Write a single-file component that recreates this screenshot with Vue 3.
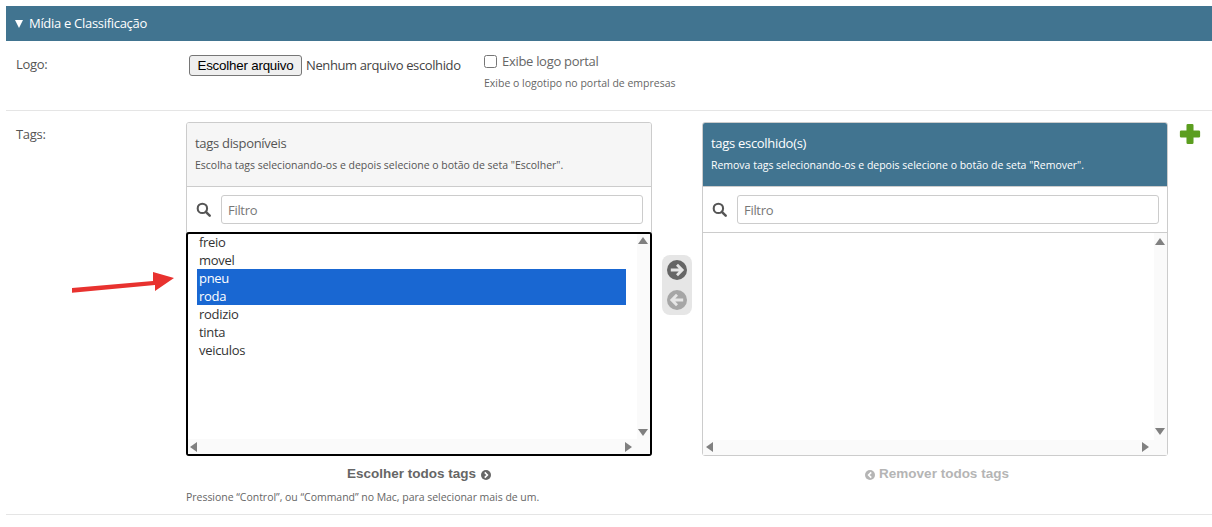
<script setup>
const panels = [
  {
    key: 'left',
    title: 'tags disponíveis',
    help: 'Escolha tags selecionando-os e depois selecione o botão de seta "Escolher".',
    items: [
      { t: 'freio' }, { t: 'movel' }, { t: 'pneu', s: true }, { t: 'roda', s: true },
      { t: 'rodizio' }, { t: 'tinta' }, { t: 'veiculos' }
    ]
  },
  {
    key: 'right',
    title: 'tags escolhido(s)',
    help: 'Remova tags selecionando-os e depois selecione o botão de seta "Remover".',
    items: []
  }
]
</script>

<template>
  <div class="page">
    <div class="bar"><span class="caret"></span>Mídia e Classificação</div>

    <div class="row logo-row">
      <label class="lbl">Logo:</label>
      <div class="file">
        <button class="file-btn" type="button">Escolher arquivo</button>
        <span class="file-name">Nenhum arquivo escolhido</span>
      </div>
      <div class="portal">
        <label class="check"><input type="checkbox" />Exibe logo portal</label>
        <div class="hint">Exibe o logotipo no portal de empresas</div>
      </div>
    </div>

    <div class="row tags-row">
      <label class="lbl">Tags:</label>
      <div class="dual">
        <div class="col">
          <div class="panel">
            <div class="phead">
              <div class="ptitle">{{ panels[0].title }}</div>
              <div class="phelp">{{ panels[0].help }}</div>
            </div>
            <div class="filter">
              <svg class="search" viewBox="0 0 16 16"><circle cx="6.8" cy="6.8" r="5" fill="none" stroke="currentColor" stroke-width="2.2"/><path d="M10.5 10.5 L14.6 14.6" stroke="currentColor" stroke-width="2.6" stroke-linecap="round"/></svg>
              <div class="finput">Filtro</div>
            </div>
            <div class="list focus">
              <div v-for="it in panels[0].items" :key="it.t" class="opt" :class="{ sel: it.s }">{{ it.t }}</div>
              <div class="vtrack"><i class="tri up"></i><i class="tri down"></i></div>
              <div class="htrack"><i class="tri lf"></i><i class="tri rt"></i></div>
            </div>
          </div>
          <div class="all"><span>Escolher todos tags</span>
            <svg class="mini" viewBox="0 0 16 16"><circle cx="8" cy="8" r="8" fill="currentColor"/><path d="M6 3.8 L10.2 8 L6 12.2" fill="none" stroke="#fff" stroke-width="2.6"/></svg>
          </div>
          <div class="note">Pressione “Control”, ou “Command” no Mac, para selecionar mais de um.</div>
        </div>

        <div class="mover">
          <svg class="mv" viewBox="0 0 20 20"><circle cx="10" cy="10" r="10" fill="#666"/><path d="M3.8 10 H14.5 M10 4.8 L15.2 10 L10 15.2" fill="none" stroke="#e6e6e6" stroke-width="2.8"/></svg>
          <svg class="mv" viewBox="0 0 20 20"><circle cx="10" cy="10" r="10" fill="#a6a6a6"/><path d="M16.2 10 H5.5 M10 4.8 L4.8 10 L10 15.2" fill="none" stroke="#e6e6e6" stroke-width="2.8"/></svg>
        </div>

        <div class="col">
          <div class="panel">
            <div class="phead chosen">
              <div class="ptitle">{{ panels[1].title }}</div>
              <div class="phelp">{{ panels[1].help }}</div>
            </div>
            <div class="filter">
              <svg class="search" viewBox="0 0 16 16"><circle cx="6.8" cy="6.8" r="5" fill="none" stroke="currentColor" stroke-width="2.2"/><path d="M10.5 10.5 L14.6 14.6" stroke="currentColor" stroke-width="2.6" stroke-linecap="round"/></svg>
              <div class="finput">Filtro</div>
            </div>
            <div class="list">
              <div class="vtrack"><i class="tri up"></i><i class="tri down"></i></div>
              <div class="htrack"><i class="tri lf"></i><i class="tri rt"></i></div>
            </div>
          </div>
          <div class="all off">
            <svg class="mini" viewBox="0 0 16 16"><circle cx="8" cy="8" r="8" fill="currentColor"/><path d="M10 3.8 L5.8 8 L10 12.2" fill="none" stroke="#fff" stroke-width="2.6"/></svg>
            <span>Remover todos tags</span>
          </div>
        </div>

        <svg class="plus" viewBox="0 0 20 20"><path d="M8 2 H12 V8 H18 V12 H12 V18 H8 V12 H2 V8 H8 Z" fill="#5b9e1f" stroke="#5b9e1f" stroke-width="2.4" stroke-linejoin="round"/></svg>
      </div>

      <svg class="arrow" viewBox="0 0 106 24"><path d="M2 18 L83 11 L83 2 L104 8 L85 21 L85 15 L2 22.7 Z" fill="#e8322f"/></svg>
    </div>
  </div>
</template>

<style>
html, body { margin: 0; background: #fff; }
</style>

<style scoped>
.page {
  width: 1212px;
  height: 527px;
  padding-top: 6px;
  box-sizing: border-box;
  overflow: hidden;
  font-family: "Open Sans", "Noto Sans", sans-serif;
  font-size: 13px;
  letter-spacing: -0.3px;
  color: #555;
}
.bar {
  margin-left: 6px;
  height: 35px;
  background: #417490;
  color: #fff;
  line-height: 35px;
  padding-left: 9px;
  display: flex;
  align-items: center;
}
.caret {
  width: 0;
  height: 0;
  border-left: 4px solid transparent;
  border-right: 4px solid transparent;
  border-top: 8px solid #fff;
  margin-right: 6px;
}
.row {
  display: flex;
  position: relative;
  margin-left: 6px;
  border-bottom: 1px solid #e5e5e5;
}
.logo-row { height: 70px; box-sizing: border-box; padding-top: 14px; }
.lbl { width: 180px; padding-left: 10px; box-sizing: border-box; flex: none; line-height: 18px; }
.file { width: 295px; flex: none; display: flex; align-items: flex-start; margin-left: 3px; }
.file-btn {
  width: 113px;
  height: 21px;
  padding: 0;
  font-family: "Liberation Sans", Arial, sans-serif;
  font-size: 13.33px;
  letter-spacing: -0.2px;
  color: #000;
  background: #efefef;
  border: 1px solid #767676;
  border-radius: 3px;
}
.file-name { margin-left: 4px; line-height: 20px; color: #444; letter-spacing: -0.38px; }
.portal { margin-top: -3px; }
.check { display: flex; align-items: center; height: 18px; color: #666; }
.check input { width: 13px; height: 13px; margin: 0 5px 0 0; }
.hint { margin-top: 6px; font-size: 10.5px; letter-spacing: 0; line-height: 14px; color: #666; }

.tags-row { height: 404px; box-sizing: border-box; padding-top: 11px; }
.tags-row .lbl { margin-top: 3px; }
.dual { display: flex; align-items: flex-start; position: relative; }
.col { width: 466px; flex: none; }
.panel {
  height: 334px;
  box-sizing: border-box;
  border: 1px solid #ccc;
  border-radius: 3px;
  display: flex;
  flex-direction: column;
}
.phead {
  height: 64px;
  flex: none;
  box-sizing: border-box;
  padding: 11px 8px 0;
  background: #f6f6f6;
  border-bottom: 1px solid #ccc;
  border-radius: 2px 2px 0 0;
}
.phead.chosen { background: #417490; color: #fff; }
.ptitle { line-height: 18px; }
.phelp { margin-top: 6px; font-size: 10.5px; letter-spacing: -0.01px; line-height: 14px; }
.filter {
  height: 46px;
  flex: none;
  box-sizing: border-box;
  border-bottom: 1px solid #ccc;
  padding: 8px 8px 0 9px;
  display: flex;
  gap: 10px;
}
.search { width: 15px; height: 15px; margin-top: 7px; color: #555; flex: none; }
.finput {
  flex: 1;
  height: 29px;
  box-sizing: border-box;
  border: 1px solid #ccc;
  border-radius: 3px;
  padding-left: 6px;
  line-height: 28px;
  color: #777;
}
.list {
  position: relative;
  flex: 1;
  padding-left: 10px;
  color: #333;
}
.list.focus {
  margin: -1px;
  border: 2px solid #000;
  border-radius: 3px;
  padding-left: 9px;
}
.opt { width: 429px; padding-left: 2px; height: 18px; line-height: 18px; box-sizing: border-box; }
.opt:first-child { margin-top: -1px; }
.opt.sel { background: #1967d2; color: #fff; }
.vtrack { position: absolute; top: 0; right: 0; bottom: 0; width: 13px; background: #fafafa; }
.htrack { position: absolute; left: 0; right: 13px; bottom: 0; height: 15px; background: #fafafa; }
.tri { position: absolute; width: 0; height: 0; }
.tri.up { top: 5px; left: 1px; border: 5px solid transparent; border-top: 0; border-bottom: 7px solid #808080; }
.tri.down { bottom: 20px; left: 1px; border: 5px solid transparent; border-bottom: 0; border-top: 7px solid #808080; }
.tri.lf { left: 3px; bottom: 3px; border: 5px solid transparent; border-left: 0; border-right: 7px solid #808080; }
.tri.rt { right: 5px; bottom: 3px; border: 5px solid transparent; border-right: 0; border-left: 7px solid #808080; }
.list.focus .tri.up { top: 3px; }
.list.focus .tri.down { bottom: 18px; }
.list.focus .tri.lf { bottom: 2px; left: 2px; }
.list.focus .tri.rt { bottom: 2px; }

.all {
  margin-top: 9px;
  display: flex;
  justify-content: center;
  align-items: center;
  gap: 5px;
  font-family: "Liberation Sans", Arial, sans-serif;
  font-weight: 700;
  font-size: 13.5px;
  letter-spacing: 0;
  line-height: 18px;
  color: #666;
}
.all.off { color: #b5b5b5; gap: 4px; padding-left: 4px; }
.mini { width: 10px; height: 10px; margin-top: 2px; }
.note { margin-top: 7px; font-size: 10.5px; letter-spacing: -0.03px; line-height: 14px; color: #666; }

.mover {
  width: 30px;
  height: 60px;
  margin: 133px 10px 0;
  flex: none;
  box-sizing: border-box;
  background: #e6e6e6;
  border-radius: 8px;
  padding: 5px;
  display: flex;
  flex-direction: column;
  gap: 10px;
}
.mv { width: 20px; height: 20px; flex: none; }
.plus { width: 22px; height: 22px; flex: none; margin: 1px 0 0 11px; }
.arrow { position: absolute; left: 64px; top: 159px; width: 106px; height: 24px; }
</style>
